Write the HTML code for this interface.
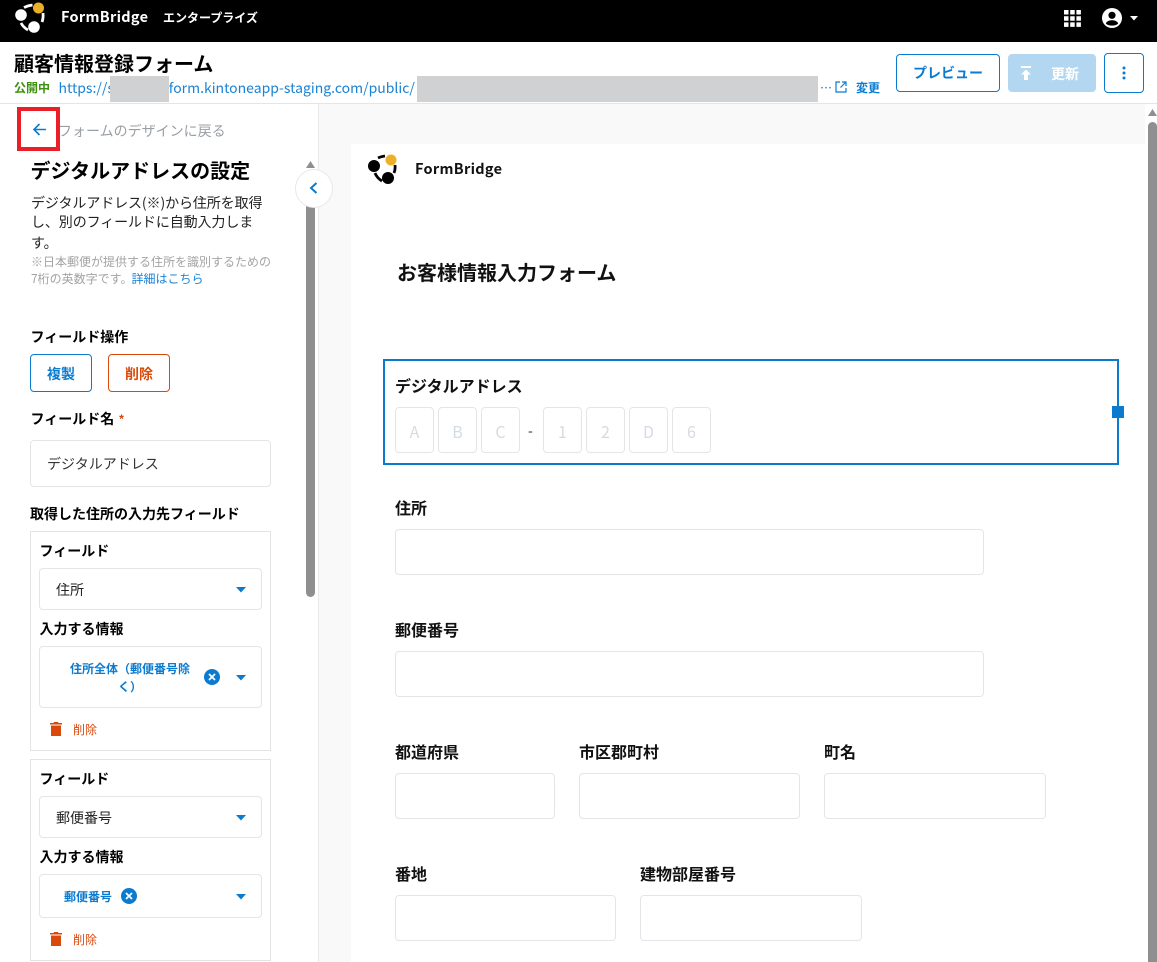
<!DOCTYPE html>
<html lang="ja"><head><meta charset="utf-8"><title>FormBridge</title>
<style>
html,body{margin:0;padding:0;background:#fff}
body{width:1157px;height:962px;position:relative;overflow:hidden;font-family:"Noto Sans CJK JP","Liberation Sans",sans-serif;color:#000}
div,span.a,svg{position:absolute;box-sizing:border-box}
.t{white-space:nowrap;line-height:20px}
.b{font-weight:700}
.box{border:1px solid #e3e5e8;border-radius:4px;background:#fff}
.sec{border:1px solid #e3e3e3;background:#fff}
.blue{color:#0b7bd0}
.red{color:#d9490b}
.ph{width:39px;height:46px;top:407px;border:1px solid #e3e5e8;border-radius:4px;color:#d5dbe3;font-size:16px;line-height:46px;text-align:center}
</style></head><body>

<div style="left:0;top:0;width:1157px;height:42px;background:#000"></div>
<svg style="left:14px;top:2px" width="32" height="32" viewBox="0 0 32 32">
<circle cx="24.500" cy="6" r="5.500" fill="#ecb028"/><circle cx="7" cy="13" r="5.800" fill="#fff"/><circle cx="20" cy="25" r="5.800" fill="#fff"/>
<path d="M10 5.500Q14 3.500 18.500 3M29 11Q29.500 16 28 20M7 21Q9.500 25.500 14 28" fill="none" stroke="#fff" stroke-width="2.800"/></svg>
<div class="t b" style="left:61px;top:7px;color:#fff;font-size:14.500px;letter-spacing:.3px">FormBridge</div>
<div class="t b" style="left:163px;top:8px;color:#fff;font-size:12px">エンタープライズ</div>
<svg style="left:1064px;top:10px" width="17" height="17" viewBox="0 0 17 17" fill="#fff"><path d="M0 0h4.500v4.500H0zM6.200 0h4.500v4.500H6.200zM12.400 0h4.500v4.500h-4.500zM0 6.200h4.500v4.500H0zM6.200 6.200h4.500v4.500H6.200zM12.400 6.200h4.500v4.500h-4.500zM0 12.400h4.500v4.500H0zM6.200 12.400h4.500v4.500H6.200zM12.400 12.400h4.500v4.500h-4.500z"/></svg>
<svg style="left:1102px;top:8px" width="20" height="20" viewBox="0 0 20 20"><circle cx="10" cy="10" r="10" fill="#fff"/><circle cx="10" cy="7.300" r="3.600" fill="#000"/><path d="M3.800 15.500C5 12.800 8 12.300 10 12.300s5 .5 6.200 3.200C14.800 17 12.500 17.600 10 17.600S5.200 17 3.800 15.500z" fill="#000"/></svg>
<svg style="left:1129px;top:16px" width="10" height="6" viewBox="0 0 10 6"><path d="M1 0h8L5 4.500z" fill="#fff"/></svg>

<div class="t b" style="left:14px;top:51px;font-size:20px;line-height:24px">顧客情報登録フォーム</div>
<div class="t b" style="left:14px;top:78px;font-size:12px;color:#3d8f0f">公開中</div>
<div class="t" style="left:58.500px;top:78px;font-size:14px;color:#1a82d4;width:766px;overflow:hidden">https://s<span style="display:inline-block;width:51px"></span>.form.kintoneapp-staging.com/public/</div>
<div style="left:110px;top:76px;width:59px;height:26px;background:#d0d1d3"></div>
<div style="left:417px;top:76px;width:401px;height:26px;background:#d0d1d3"></div>
<div class="t" style="left:820px;top:78px;font-size:12px;color:#1a82d4">⋯</div>
<svg style="left:835px;top:81px" width="12" height="12" viewBox="0 0 12 12" fill="none" stroke="#0b7bd0" stroke-width="1.200"><path d="M5 1H1v10h10V7M7 1h4v4M11 1L5.500 6.500"/></svg>
<div class="t b blue" style="left:856px;top:78px;font-size:12px">変更</div>

<div style="left:896px;top:54px;width:104px;height:38px;border:1px solid #0b7bd0;border-radius:4px;text-align:center;line-height:36px;font-size:14px;font-weight:700;color:#0b7bd0">プレビュー</div>
<div style="left:1008px;top:54px;width:88px;height:38px;background:#b4d7f1;border-radius:4px"></div>
<svg style="left:1020px;top:66px" width="12" height="14" viewBox="0 0 12 14" fill="#fff"><path d="M1 0h10v2H1zM6 3.500L11 8.500H8V14H4V8.500H1z"/></svg>
<div class="t b" style="left:1051px;top:64px;font-size:14px;color:#fff">更新</div>
<div style="left:1104px;top:53px;width:40px;height:40px;border:1px solid #0b7bd0;border-radius:4px"></div>
<svg style="left:1122px;top:66px" width="4" height="14" viewBox="0 0 4 14" fill="#0b7bd0"><circle cx="2" cy="2" r="1.500"/><circle cx="2" cy="7" r="1.500"/><circle cx="2" cy="12" r="1.500"/></svg>

<div style="left:0;top:103px;width:1157px;height:1px;background:#e5e5e5"></div>
<div style="left:319px;top:104px;width:826px;height:858px;background:#f9f9f9"></div>
<div style="left:318px;top:104px;width:1px;height:858px;background:#e8e8e8"></div>
<div style="left:351px;top:144px;width:794px;height:818px;background:#fff"></div>

<svg style="left:1148px;top:109px" width="9" height="7" viewBox="0 0 9 7"><path d="M4.500 0L9 7H0z" fill="#8f8f8f"/></svg>
<div style="left:1148px;top:122px;width:9px;height:840px;background:#8f8f8f;border-radius:5px 5px 0 0"></div>

<svg style="left:33px;top:123px" width="13" height="13" viewBox="0 0 13 13" fill="none" stroke="#0b7bd0" stroke-width="1.600"><path d="M13 6.500H1.500M6.500 1L1 6.500 6.500 12"/></svg>
<div class="t" style="left:58px;top:121px;font-size:14px;color:#9a9fa5">フォームのデザインに戻る</div>
<div style="left:17px;top:107px;width:43px;height:44px;border:4px solid #ea1f27"></div>

<svg style="left:306px;top:161px" width="9" height="7" viewBox="0 0 9 7"><path d="M4.500 0L9 7H0z" fill="#8f8f8f"/></svg>
<div style="left:306px;top:172px;width:9px;height:425px;background:#8f8f8f;border-radius:0 0 5px 5px"></div>
<div style="left:295px;top:169px;width:38px;height:39px;background:#fff;border:1px solid #e8e8e8;border-radius:50%"></div>
<svg style="left:309px;top:182px" width="9" height="12" viewBox="0 0 9 12" fill="none" stroke="#0b7bd0" stroke-width="2"><path d="M7.500 1L2 6l5.500 5"/></svg>

<div class="t b" style="left:30.500px;top:158px;font-size:20px;line-height:24px">デジタルアドレスの設定</div>
<div class="t" style="left:31px;top:193px;font-size:14px;letter-spacing:-.1px;color:#222">デジタルアドレス(※)から住所を取得</div>
<div class="t" style="left:31px;top:212px;font-size:14px;letter-spacing:-.1px;color:#222">し、別のフィールドに自動入力しま</div>
<div class="t" style="left:31px;top:233px;font-size:14px;color:#222">す。</div>
<div class="t" style="left:31px;top:252px;font-size:12px;color:#a3a3a3">※日本郵便が提供する住所を識別するための</div>
<div class="t" style="left:31px;top:269px;font-size:12px;color:#a3a3a3">7桁の英数字です。<span style="color:#1a82d4;margin-left:-1px">詳細はこちら</span></div>

<div class="t b" style="left:30.500px;top:327px;font-size:14px">フィールド操作</div>
<div style="left:30px;top:354px;width:62px;height:38px;border:1px solid #0b7bd0;border-radius:4px;text-align:center;line-height:38px;font-size:14px;font-weight:700;color:#0b7bd0">複製</div>
<div style="left:108px;top:354px;width:62px;height:38px;border:1px solid #d9490b;border-radius:4px;text-align:center;line-height:38px;font-size:14px;font-weight:700;color:#d9490b">削除</div>
<div class="t b" style="left:30.500px;top:409px;font-size:14px">フィールド名</div>
<div class="t b" style="left:118.500px;top:410px;font-size:12px;color:#d9490b">*</div>
<div class="box" style="left:30px;top:440px;width:241px;height:47px"></div>
<div class="t" style="left:47px;top:454px;font-size:14px;color:#333">デジタルアドレス</div>
<div class="t b" style="left:30px;top:504px;font-size:14px">取得した住所の入力先フィールド</div>

<div class="sec" style="left:30px;top:531px;width:241px;height:220px"></div>
<div class="t b" style="left:39.500px;top:541px;font-size:14px">フィールド</div>
<div class="box" style="left:39px;top:568px;width:223px;height:42px"></div>
<div class="t" style="left:56px;top:580px;font-size:14px;color:#222">住所</div>
<svg style="left:236px;top:587px" width="10" height="6" viewBox="0 0 10 6"><path d="M0 0h10L5 5.500z" fill="#0b7bd0"/></svg>
<div class="t b" style="left:39.500px;top:619px;font-size:14px">入力する情報</div>
<div class="box" style="left:39px;top:646px;width:223px;height:62px"></div>
<div class="b blue" style="left:68px;top:659.500px;width:124px;font-size:12px;line-height:18px;text-align:center">住所全体（郵便番号除く）</div>
<svg style="left:204px;top:669px" width="16" height="16" viewBox="0 0 16 16"><circle cx="8" cy="8" r="8" fill="#0b7bd0"/><path d="M5 5l6 6M11 5l-6 6" stroke="#fff" stroke-width="1.800"/></svg>
<svg style="left:236px;top:675px" width="10" height="6" viewBox="0 0 10 6"><path d="M0 0h10L5 5.500z" fill="#0b7bd0"/></svg>
<svg style="left:50px;top:722px" width="12" height="14" viewBox="0 0 12 14" fill="#d9490b"><path d="M4 0h4l.5 1H12v1.500H0V1h3.500zM1 3.500h10V14H1z"/></svg>
<div class="t red" style="left:73px;top:720px;font-size:12px">削除</div>

<div class="sec" style="left:30px;top:759px;width:241px;height:202px"></div>
<div class="t b" style="left:39.500px;top:769px;font-size:14px">フィールド</div>
<div class="box" style="left:39px;top:796px;width:223px;height:42px"></div>
<div class="t" style="left:56px;top:808px;font-size:14px;color:#222">郵便番号</div>
<svg style="left:236px;top:815px" width="10" height="6" viewBox="0 0 10 6"><path d="M0 0h10L5 5.500z" fill="#0b7bd0"/></svg>
<div class="t b" style="left:39.500px;top:847px;font-size:14px">入力する情報</div>
<div class="box" style="left:39px;top:874px;width:223px;height:44px"></div>
<div class="t b blue" style="left:64px;top:887px;font-size:12px">郵便番号</div>
<svg style="left:121px;top:888px" width="16" height="16" viewBox="0 0 16 16"><circle cx="8" cy="8" r="8" fill="#0b7bd0"/><path d="M5 5l6 6M11 5l-6 6" stroke="#fff" stroke-width="1.800"/></svg>
<svg style="left:236px;top:894px" width="10" height="6" viewBox="0 0 10 6"><path d="M0 0h10L5 5.500z" fill="#0b7bd0"/></svg>
<svg style="left:50px;top:932px" width="12" height="14" viewBox="0 0 12 14" fill="#d9490b"><path d="M4 0h4l.5 1H12v1.500H0V1h3.500zM1 3.500h10V14H1z"/></svg>
<div class="t red" style="left:73px;top:930px;font-size:12px">削除</div>

<svg style="left:367px;top:153px" width="32" height="32" viewBox="0 0 32 32">
<circle cx="24" cy="7" r="5.500" fill="#ecb028"/><circle cx="7" cy="13" r="6" fill="#000"/><circle cx="21" cy="25" r="6" fill="#000"/>
<path d="M11 5Q14 3.500 18 3M28 12Q28.500 16.500 27 20M8 20Q10 25 15 28" fill="none" stroke="#000" stroke-width="2.800"/></svg>
<div class="t b" style="left:415px;top:159px;font-size:14.500px;color:#111;letter-spacing:.3px">FormBridge</div>
<div class="t b" style="left:397px;top:259px;font-size:20px;line-height:26px;color:#111">お客様情報入力フォーム</div>

<div style="left:383px;top:359px;width:736px;height:106px;border:2px solid #0b7bd0"></div>
<div style="left:1112px;top:406px;width:12px;height:12px;background:#0b7bd0"></div>
<div class="t b" style="left:395px;top:375px;font-size:16px;color:#111">デジタルアドレス</div>
<div class="ph" style="left:395px">A</div><div class="ph" style="left:438px">B</div><div class="ph" style="left:481px">C</div>
<div class="t" style="left:528px;top:421px;font-size:14px;color:#222">-</div>
<div class="ph" style="left:543px">1</div><div class="ph" style="left:586px">2</div><div class="ph" style="left:629px">D</div><div class="ph" style="left:672px">6</div>

<div class="t b" style="left:395px;top:497px;font-size:16px;color:#111">住所</div>
<div class="box" style="left:395px;top:529px;width:589px;height:46px"></div>
<div class="t b" style="left:395px;top:619px;font-size:16px;color:#111">郵便番号</div>
<div class="box" style="left:395px;top:651px;width:589px;height:46px"></div>
<div class="t b" style="left:395px;top:741px;font-size:16px;color:#111">都道府県</div>
<div class="box" style="left:395px;top:773px;width:160px;height:46px"></div>
<div class="t b" style="left:579px;top:741px;font-size:16px;color:#111">市区郡町村</div>
<div class="box" style="left:579px;top:773px;width:221px;height:46px"></div>
<div class="t b" style="left:824px;top:741px;font-size:16px;color:#111">町名</div>
<div class="box" style="left:824px;top:773px;width:222px;height:46px"></div>
<div class="t b" style="left:395px;top:863px;font-size:16px;color:#111">番地</div>
<div class="box" style="left:395px;top:895px;width:221px;height:46px"></div>
<div class="t b" style="left:640px;top:863px;font-size:16px;color:#111">建物部屋番号</div>
<div class="box" style="left:640px;top:895px;width:222px;height:46px"></div>
</body></html>
